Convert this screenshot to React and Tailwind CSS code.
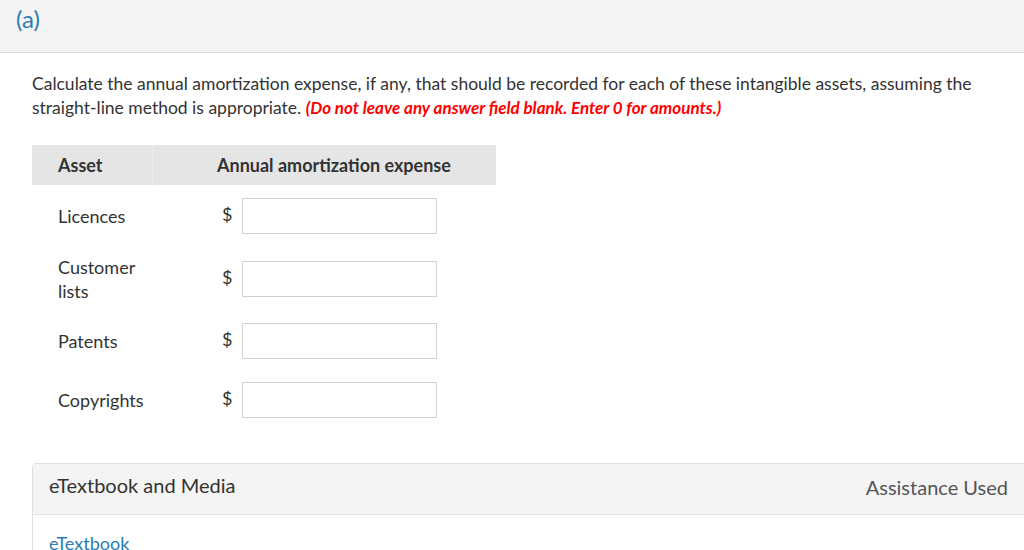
import React from "react";

const rows = [
  { label: "Licences", h: "h-[61px]" },
  { label: "Customer lists", h: "h-[65px]" },
  { label: "Patents", h: "h-[59px]" },
  { label: "Copyrights", h: "h-[59px]" },
];

export default function App() {
  return (
    <div className="w-[1024px] h-[550px] overflow-hidden bg-white text-[#333] font-['Lato','Liberation_Sans',sans-serif]">
      <div className="h-[53px] bg-[#f4f4f4] border-b border-[#dcdcdc] pl-4 pt-[3px]">
        <span className="text-[24px] leading-[32px] text-[#2a7db3]">(a)</span>
      </div>
      <div className="px-8 pt-[19px]">
        <p className="text-[17.5px] leading-[24px] w-[960px]">
          Calculate the annual amortization expense, if any, that should be recorded for each of these intangible assets, assuming the straight-line method is appropriate.{" "}
          <span className="text-[17px] font-bold italic text-[#ff0000]">(Do not leave any answer field blank. Enter 0 for amounts.)</span>
        </p>
        <div className="mt-[25px] w-[464px]">
          <div className="grid grid-cols-[121px_343px] h-10 bg-[#e5e5e5] text-[18px] font-bold">
            <div className="flex items-center pl-[26px] border-r border-[#ececec]">Asset</div>
            <div className="flex items-center pl-[64px]">Annual amortization expense</div>
          </div>
          {rows.map((r) => (
            <div key={r.label} className={`grid grid-cols-[121px_343px] ${r.h} text-[18px]`}>
              <div className="flex items-center pl-[26px] pr-2 leading-[24px]">{r.label}</div>
              <div className="flex items-center pl-[69px]">
                <span className="text-[18px] text-[#333] w-[20px] -mt-[3px]">$</span>
                <input className="w-[195px] h-[36px] border border-[#d2d2d2] bg-white outline-none px-2" />
              </div>
            </div>
          ))}
        </div>
      </div>
      <div className="ml-8 mt-[34px] w-[1000px] border border-[#dedede] rounded-tl-[4px]">
        <div className="h-[51px] bg-[#f4f4f4] border-b border-[#e2e2e2] flex items-center justify-between pl-4 pr-[23px]">
          <span className="text-[20px] text-[#333] -mt-[9px]">eTextbook and Media</span>
          <span className="text-[20px] text-[#555] -mt-[5px]">Assistance Used</span>
        </div>
        <div className="pl-4 pt-[15px] pb-6">
          <span className="text-[18px] text-[#2a7db3]">eTextbook</span>
        </div>
      </div>
    </div>
  );
}
